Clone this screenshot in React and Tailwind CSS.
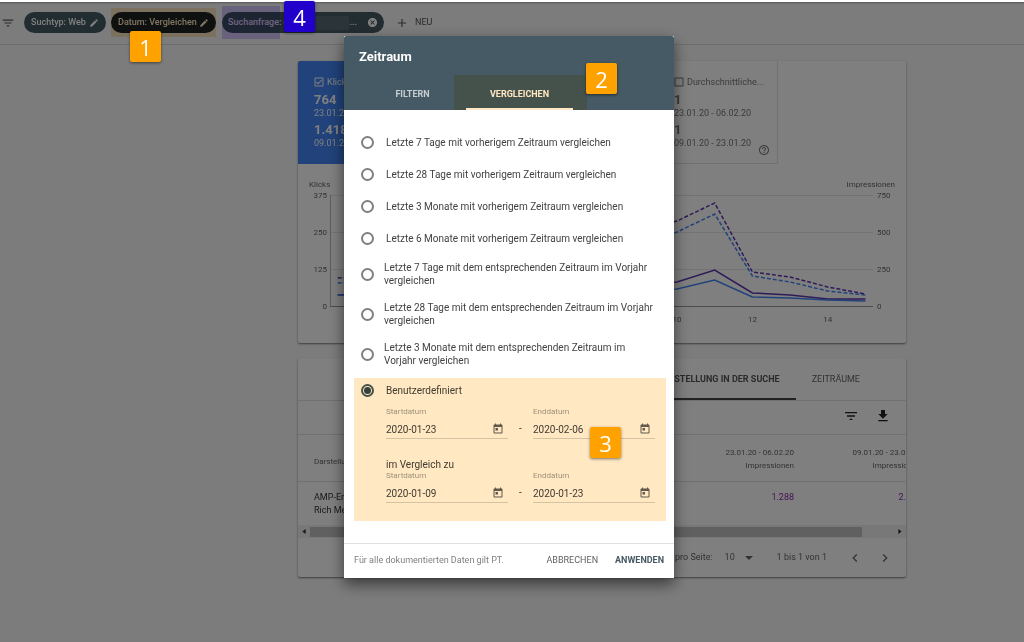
import { useState } from 'react';
import { MdEdit, MdFilterList, MdAdd, MdCancel, MdOutlineCheckBox, MdCheckBoxOutlineBlank, MdHelpOutline, MdFileDownload, MdChevronLeft, MdChevronRight, MdToday } from 'react-icons/md';

const PRESETS = [
  'Letzte 7 Tage mit vorherigem Zeitraum vergleichen',
  'Letzte 28 Tage mit vorherigem Zeitraum vergleichen',
  'Letzte 3 Monate mit vorherigem Zeitraum vergleichen',
  'Letzte 6 Monate mit vorherigem Zeitraum vergleichen',
];

const YEAR_PRESETS = [
  'Letzte 7 Tage mit dem entsprechenden Zeitraum im Vorjahr vergleichen',
  'Letzte 28 Tage mit dem entsprechenden Zeitraum im Vorjahr vergleichen',
  'Letzte 3 Monate mit dem entsprechenden Zeitraum im Vorjahr vergleichen',
];

// null is a tile that has no data loaded yet
const METRICS = [
  { label: 'Klicks', current: '764', previous: '1.418', active: true },
  null,
  null,
  { label: 'Durchschnittliche...', current: '1', previous: '1' },
];

// x = day * 37.7 + 2, y measured from the top of the chart
const SERIES = [
  { color: '#5e35b1', dashed: true, y: [114, 112, 110, 108, 104, 98, 90, 80, 66, 57, 39, 108, 113, 123, 130] },
  { color: '#4285f4', dashed: true, y: [119, 117, 116, 112, 108, 103, 98, 90, 84, 68, 50, 112, 118, 127, 131] },
  { color: '#5e35b1', y: [131, 130, 129, 128, 127, 126, 125, 124, 122, 118, 106, 129, 131, 135, 135] },
  { color: '#4285f4', y: [131, 130, 130, 130, 129, 129, 128, 127, 126, 125, 116, 133, 134, 136, 137] },
];

const Badge = ({ children, className }) => (
  <span
    className={`absolute z-30 flex size-[31px] items-center justify-center rounded-xs text-[22px] leading-none font-normal text-white shadow-[0_1px_3px_rgba(0,0,0,0.5)] font-['Open_Sans',sans-serif] ${className}`}
  >
    {children}
  </span>
);

const Highlight = ({ className }) => (
  <span className={`pointer-events-none absolute mix-blend-multiply ${className}`} />
);

const FilterBar = () => (
  <header className="flex h-[43px] items-center border-b border-[#dadada] pb-px pl-px text-[9px] font-medium">
    <button aria-label="Filter" className="mr-[9px]">
      <MdFilterList className="size-3.5 text-[#555]" />
    </button>
    <button className="flex h-[21px] w-[82px] items-center justify-between rounded-full bg-[#455a64] px-[7px] whitespace-nowrap text-white">
      Suchtyp: Web
      <MdEdit className="size-2.5" />
    </button>
    <div className="relative ml-[5px]">
      <button className="flex h-[21px] w-[105px] items-center justify-between rounded-full bg-[#1c2529] px-[7px] whitespace-nowrap text-white">
        Datum: Vergleichen
        <MdEdit className="size-2.5" />
      </button>
      <Highlight className="-inset-y-1 inset-x-0 bg-[#ffe8c2]" />
    </div>
    <div className="relative ml-1.5">
      <button className="flex h-[21px] w-[162px] items-center rounded-full bg-[#455a64] px-1.5 whitespace-nowrap text-white">
        Suchanfrage: u
        <span className="ml-1 h-3.5 flex-1 bg-[#566a73]" />
        <span className="mr-2.5">...</span>
        <MdCancel className="size-[11px]" />
      </button>
      <Highlight className="-inset-y-1.5 left-0 w-[58px] bg-[#d9caff]" />
    </div>
    <button className="ml-[11px] flex items-center gap-1.5 font-normal text-[#555]">
      <MdAdd className="size-3.5" />
      NEU
    </button>
  </header>
);

const MetricTile = ({ label, current, previous, active }) => (
  <div
    className={`relative h-[103px] w-[120px] border-r border-b pt-[15px] pl-4 text-[9px] ${
      active ? 'border-[#4285f4] bg-[#4285f4] text-white' : 'border-[#e0e0e0] text-[#777]'
    }`}
  >
    <div className="-ml-px flex items-center gap-0.5 leading-3">
      {active ? <MdOutlineCheckBox className="size-3 shrink-0" /> : <MdCheckBoxOutlineBlank className="size-3 shrink-0" />}
      <span className="whitespace-nowrap">{label}</span>
    </div>
    <div className="mt-1 text-[13px] leading-4 font-bold">{current}</div>
    <div className="leading-[10px] whitespace-nowrap">23.01.20 - 06.02.20</div>
    <div className="mt-1 text-[13px] leading-4 font-bold">{previous}</div>
    <div className="leading-[10px] whitespace-nowrap">09.01.20 - 23.01.20</div>
    {!active && <MdHelpOutline className="absolute right-[7px] bottom-[7px] size-3" />}
  </div>
);

const Chart = () => (
  <svg viewBox="0 0 608 179" className="w-full text-[8px]" fill="#666">
    <text x="11" y="23">Klicks</text>
    <text x="597" y="23" textAnchor="end">Impressionen</text>
    {[0, 1, 2, 3].map(i => (
      <g key={i}>
        <path d={`M32 ${31.5 + i * 37}H575`} stroke={i === 3 ? '#999' : '#e6e6e6'} />
        <text x="29" y={34 + i * 37} textAnchor="end">{375 - i * 125}</text>
        <text x="579" y={34 + i * 37}>{750 - i * 250}</text>
      </g>
    ))}
    <path d="M32.5 31V142" stroke="#bbb" />
    {[10, 12, 14].map(day => (
      <text key={day} x={day * 37.7 + 2} y="158" textAnchor="middle">{day}</text>
    ))}
    {SERIES.map((s, i) => (
      <polyline
        key={i}
        points={s.y.map((y, d) => `${(d + 1) * 37.7 + 2},${y}`).join(' ')}
        fill="none"
        stroke={s.color}
        strokeWidth="1.5"
        strokeDasharray={s.dashed ? '4 2' : undefined}
      />
    ))}
  </svg>
);

const ResultsCard = () => (
  <section className="mt-[15px] overflow-hidden rounded-xs bg-white text-[#666] shadow-[0_1px_2px_rgba(0,0,0,0.5)]">
    <div className="flex h-[43px] justify-end border-b border-[#e0e0e0] pr-[30px] text-[9px]">
      <button className="border-b-2 border-[#444] px-4 pt-1 font-bold text-[#555]">DARSTELLUNG IN DER SUCHE</button>
      <button className="px-4 pt-0.5">ZEITRÄUME</button>
    </div>
    <div className="flex h-[34px] items-center justify-end gap-4 border-b border-[#e0e0e0] pr-[15px] pb-1 text-[#222]">
      <button aria-label="Zeilen filtern"><MdFilterList className="size-4" /></button>
      <button aria-label="Herunterladen"><MdFileDownload className="size-4" /></button>
    </div>
    <div className="overflow-hidden">
      <table className="w-[640px] table-fixed text-[9px]">
        <thead>
          <tr className="h-[46px] border-b border-[#e0e0e0] text-[8px] leading-[13px]">
            <th className="w-[369px] pt-2 pl-4 text-left font-normal">Darstellung in der Suche</th>
            <th className="w-[127px] pt-0.5 text-right font-normal">23.01.20 - 06.02.20<br />Impressionen</th>
            <th className="w-[127px] pt-0.5 text-right font-normal">09.01.20 - 23.01.20<br />Impressionen</th>
            <th></th>
          </tr>
        </thead>
        <tbody>
          <tr className="h-11 align-top leading-[13px]">
            <td className="pt-[9px] pl-4 text-[#333]">AMP-Ergebnis ohne<br />Rich Media</td>
            <td className="pt-[9px] text-right text-[#8e24aa]">1.288</td>
            <td className="pt-[9px] text-right text-[#8e24aa]">2.045</td>
            <td></td>
          </tr>
        </tbody>
      </table>
    </div>
    <div className="flex h-[13px] items-center bg-[#f1f1f1] px-1 text-[#333]">
      <svg viewBox="0 0 4 6" className="h-[5px] w-1" fill="currentColor"><path d="M4 0v6L0 3z" /></svg>
      <div className="mr-9 ml-1 h-[10px] flex-1 bg-[#c1c1c1]" />
      <svg viewBox="0 0 4 6" className="h-[5px] w-1" fill="currentColor"><path d="M0 0v6l4-3z" /></svg>
    </div>
    <div className="flex h-[39px] items-center justify-end pr-[13px] text-[9px]">
      <label htmlFor="rows">pro Seite:</label>
      <span className="relative ml-3 flex items-center">
        <select id="rows" className="w-8 appearance-none" defaultValue="10">
          <option>10</option>
          <option>25</option>
        </select>
        <svg viewBox="0 0 8 4" className="pointer-events-none absolute right-1 h-1 w-2" fill="currentColor"><path d="M0 0h8L4 4z" /></svg>
      </span>
      <span className="ml-5">1 bis 1 von 1</span>
      <button aria-label="Zurück" className="ml-5"><MdChevronLeft className="size-4" /></button>
      <button aria-label="Weiter" className="ml-3.5"><MdChevronRight className="size-4" /></button>
    </div>
  </section>
);

const Radio = ({ label, checked, onChange, wide }) => (
  <label className={`flex items-center text-[10px] text-[#424242] ${wide ? 'h-10 gap-[10px] leading-[13px]' : 'h-8 gap-3'}`}>
    <input
      type="radio"
      name="range"
      checked={checked}
      onChange={onChange}
      className="grid size-[13px] shrink-0 appearance-none place-content-center rounded-full border-2 border-[#808080] before:size-[7px] before:rounded-full checked:border-[#455a64] checked:before:bg-[#37474f] checked:before:content-['']"
    />
    {label}
  </label>
);

const DateField = ({ id, label, value }) => (
  <div className="w-[122px]">
    <label htmlFor={id} className="block text-[8px] leading-[11px] text-[#9e9e9e]">{label}</label>
    <div className="mt-[3px] flex h-[19px] items-center border-b border-[#d5d5d5] pr-1">
      <input id={id} type="text" defaultValue={value} className="w-full min-w-0 text-[10px] text-[#424242] outline-none" />
      <button aria-label="Kalender"><MdToday className="size-3 text-[#616161]" /></button>
    </div>
  </div>
);

const DateRange = ({ id, from, to }) => (
  <div className="flex text-[10px]">
    <DateField id={`${id}-from`} label="Startdatum" value={from} />
    <span className="w-[25px] pt-[15px] text-center text-[#424242]">-</span>
    <DateField id={`${id}-to`} label="Enddatum" value={to} />
  </div>
);

const RangeDialog = () => {
  const [selected, setSelected] = useState('custom');

  return (
    <div role="dialog" aria-label="Zeitraum" className="relative w-[330px] bg-white shadow-[0_6px_14px_rgba(0,0,0,0.55)]">
      <div className="rounded-t-xs bg-[#455a64] px-[15px] text-white">
        <h2 className="h-[39px] pt-3 text-[13px] leading-[18px] font-bold">Zeitraum</h2>
        <div className="flex h-[35px] text-[9px] font-bold">
          <button className="w-[107px] pt-1 text-[#c7ced1]">FILTERN</button>
          <div className="relative w-[107px]">
            <button className="h-full w-full border-b-2 border-white pt-1.5">VERGLEICHEN</button>
            <Highlight className="inset-y-0 -right-3.5 -left-3 bg-[#ffe8c2]" />
            <Badge className="-top-3 left-[120px] bg-[#ffa200]">2</Badge>
          </div>
        </div>
      </div>

      <div className="pt-4 pr-4 pl-[17px]">
        {PRESETS.map(p => (
          <Radio key={p} label={p} checked={selected === p} onChange={() => setSelected(p)} />
        ))}
        {YEAR_PRESETS.map(p => (
          <Radio key={p} wide label={p} checked={selected === p} onChange={() => setSelected(p)} />
        ))}
      </div>

      {/* Custom range */}
      <div className="relative mr-2 mb-[22px] ml-[10px] pb-[18px] pl-[7px]">
        <Radio label="Benutzerdefiniert" checked={selected === 'custom'} onChange={() => setSelected('custom')} />
        <div className="pl-[25px]">
          <DateRange id="main" from="2020-01-23" to="2020-02-06" />
          <p className="mt-[21px] text-[10px] leading-[10px] text-[#424242]">im Vergleich zu</p>
          <DateRange id="compare" from="2020-01-09" to="2020-01-23" />
        </div>
        <Highlight className="inset-x-0 top-1 bottom-0 bg-[#ffe8c2]" />
        <Badge className="top-[53px] right-[45px] bg-[#ffa200]">3</Badge>
      </div>

      <div className="flex h-[35px] items-center border-t border-[#e0e0e0] px-[10px] text-[9px] text-[#616161]">
        <span className="flex-1 text-[#808080]">Für alle dokumentierten Daten gilt PT.</span>
        <button>ABBRECHEN</button>
        <button className="ml-[17px] font-bold text-[#455a64]">ANWENDEN</button>
      </div>
    </div>
  );
};

const App = () => (
  <div className="relative min-h-screen overflow-hidden bg-[#f8f8f8] pt-0.5 font-[Roboto,sans-serif]">
    <FilterBar />
    <main className="pt-4 pr-[118px] pl-[298px]">
      <section className="overflow-hidden rounded-xs bg-white shadow-[0_1px_2px_rgba(0,0,0,0.5)]">
        <div className="flex">
          {METRICS.map((m, i) => (
            m ? <MetricTile key={i} {...m} /> : <div key={i} className="h-[103px] w-[120px] border-r border-b border-[#e0e0e0]" />
          ))}
        </div>
        <Chart />
      </section>
      <ResultsCard />
    </main>

    {/* Backdrop and dialog */}
    <div className="absolute inset-0 z-10 flex items-start justify-center border-t-2 border-white bg-black/50 bg-clip-padding pt-[34px] pr-[6px] shadow-[inset_0_3px_2px_-2px_rgba(0,0,0,0.3)]">
      <RangeDialog />
    </div>

    <Badge className="top-[31px] left-[130px] bg-[#ffa200]">1</Badge>
    <Badge className="top-px left-[284px] bg-[#2200cc]">4</Badge>
  </div>
);

export default App;
